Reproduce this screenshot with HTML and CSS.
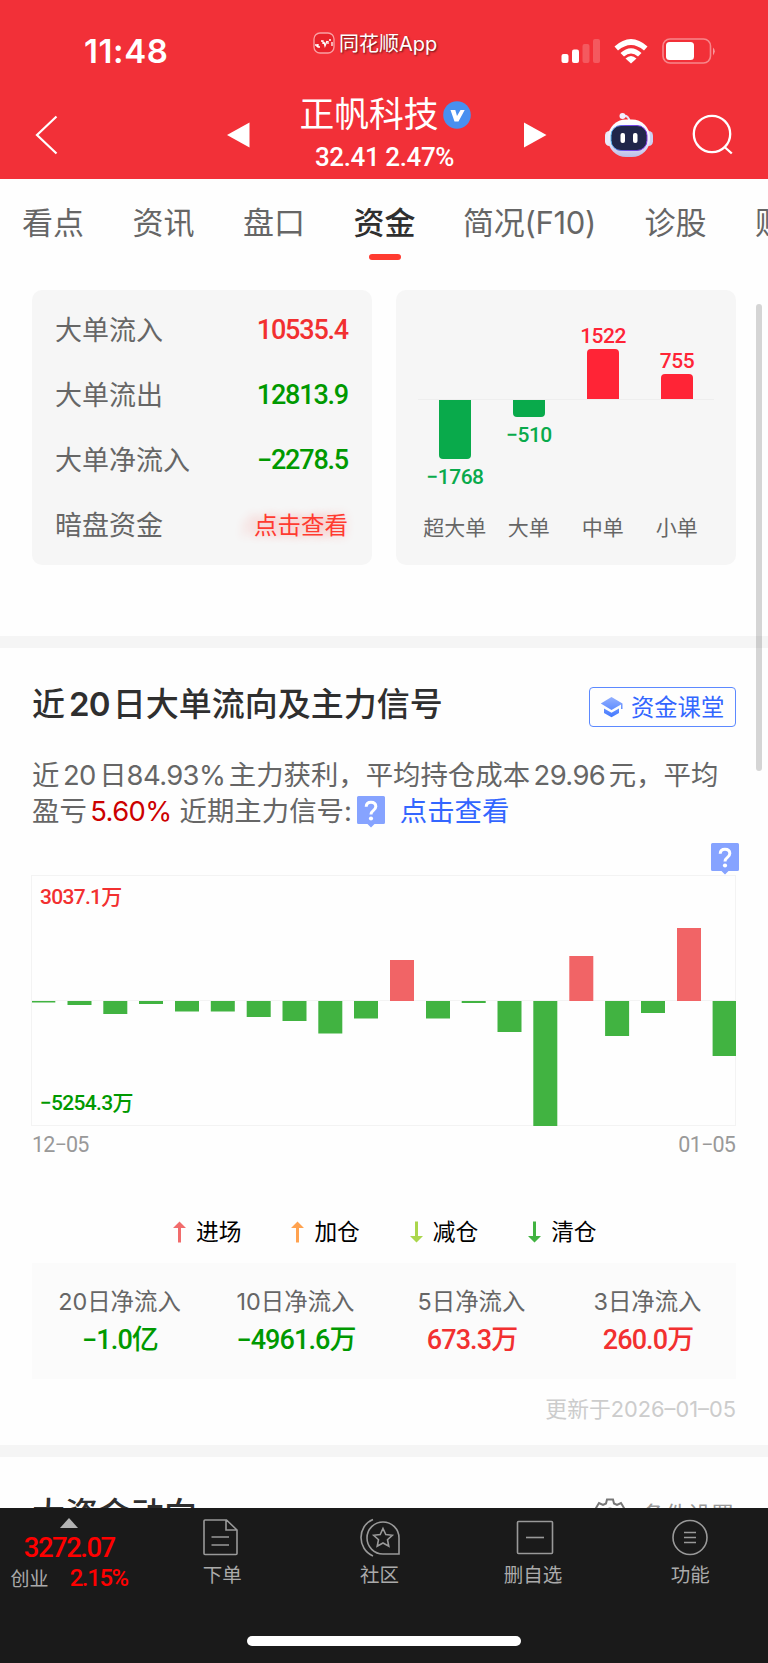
FILE: index.html
```html
<!DOCTYPE html>
<html lang="zh-CN">
  <head>
    <meta charset="utf-8" />
    <title>正帆科技</title>
    <meta name="viewport" content="width=device-width, initial-scale=1" />
    <link rel="stylesheet" href="styles.css">
  </head>

  <body>
    <header class="header">
      <div class="status">
        <span class="time">11:48</span>
        <div class="source">
          <svg width="22" height="22" viewBox="0 0 22 22">
            <rect x="1" y="1" width="20" height="20" rx="6" fill="#e8222b" stroke="#f9a0a3" stroke-width="1.3" />
            <path d="M2 13h2v2M5 12v3h2M8 9h2v3M11 10l1 4 2-5M15 9v3M16 8h2M19 10v4" fill="none" stroke="#fff" stroke-width="1.3" />
          </svg>
          <span>同花顺App</span>
        </div>
        <svg class="signals" width="156" height="28" viewBox="0 0 156 28">
          <g fill="#fff">
            <rect x="1.5" y="17" width="7" height="9" rx="2" />
            <rect x="12" y="12.500" width="7" height="13.500" rx="2" />
            <rect x="22.500" y="7" width="7" height="19" rx="2" opacity=".2" />
            <rect x="33" y="2" width="7" height="24" rx="2" opacity=".2" />
            <path d="M54.500 9.500Q71 -5.500 87.500 9.500L84 13.500Q71 2.500 58 13.500Z" />
            <path d="M60.500 16Q71 6.500 81.500 16L78 19.500Q71 13.500 64 19.500Z" />
            <path d="M65.500 21.500Q71 16.500 76.500 21.500L71 26.500Z" />
            <rect x="106" y="5" width="28" height="18" rx="3.500" />
            <path d="M153 10.500q3.500 3.500 0 8z" opacity=".5" />
          </g>
          <rect x="103" y="2" width="47.500" height="24" rx="7" fill="none" stroke="#fff" stroke-width="1.600" opacity=".42" />
        </svg>
      </div>

      <div class="title-bar">
        <svg class="back" width="26" height="42" viewBox="0 0 26 42"><path d="M22.500 2.500L3 21l19.500 18.500" fill="none" stroke="#fff" stroke-width="2.200" /></svg>
        <svg class="prev" width="23" height="26" viewBox="0 0 23 26"><path d="M0 13L22.500 .5v25z" fill="#fff" /></svg>
        <div class="stock">
          <div class="stock-name">
            <span>正帆科技</span>
            <svg width="28" height="28" viewBox="0 0 28 28">
              <circle cx="14" cy="14" r="13.800" fill="#4890f0" />
              <path d="M7.500 9h4.800l1.700 6 3.500-6h4.200l-6.200 11.500h-4z" fill="#fff" />
            </svg>
          </div>
          <div class="stock-price num">32.41 2.47%</div>
        </div>
        <svg class="next" width="23" height="26" viewBox="0 0 23 26"><path d="M22.500 13L0 .5v25z" fill="#fff" /></svg>
        <svg class="robot" width="50" height="46" viewBox="0 0 50 46">
          <defs>
            <linearGradient id="head" x1="0" y1="0" x2="0" y2="1"><stop offset="0" stop-color="#fff" /><stop offset=".6" stop-color="#ece9fa" /><stop offset="1" stop-color="#b9bde6" /></linearGradient>
            <linearGradient id="face" x1="0" y1="0" x2="1" y2="0"><stop offset="0" stop-color="#55b4ee" /><stop offset=".4" stop-color="#6c4be8" /><stop offset="1" stop-color="#7c35dd" /></linearGradient>
          </defs>
          <path d="M19 4q6-1 6.500 6" fill="none" stroke="#e6e2f6" stroke-width="2" />
          <circle cx="18.500" cy="4" r="3" fill="#f3efff" />
          <rect x="1" y="19" width="9" height="15" rx="4.500" fill="#e9eaf8" />
          <rect x="40" y="19" width="9" height="15" rx="4.500" fill="#cdd0f2" />
          <rect x="4" y="7.500" width="42" height="37.500" rx="18" fill="url(#head)" />
          <rect x="7" y="13.500" width="36" height="25" rx="10" fill="#20264a" stroke="url(#face)" stroke-width="1" />
          <rect x="16.500" y="21" width="4.500" height="10" rx="2" fill="#fff" />
          <rect x="29" y="21" width="4.500" height="10" rx="2" fill="#fff" />
        </svg>
        <svg class="search" width="42" height="42" viewBox="0 0 42 42"><g fill="none" stroke="#fff" stroke-width="2.300"><circle cx="20" cy="20" r="18.200" /><path d="M32 32.500l7.800 7" /></g></svg>
      </div>
    </header>

    <nav class="tabs">
      <a>看点</a>
      <a>资讯</a>
      <a>盘口</a>
      <a class="active">资金</a>
      <a class="f10">简况(F10)</a>
      <a>诊股</a>
      <a>财务</a>
    </nav>

    <main class="content">
      <section class="cards">
        <div class="card flow">
          <div class="flow-row"><span>大单流入</span><b class="num red">10535.4</b></div>
          <div class="flow-row"><span>大单流出</span><b class="num green">12813.9</b></div>
          <div class="flow-row"><span>大单净流入</span><b class="num green">−2278.5</b></div>
          <div class="flow-row"><span>暗盘资金</span><a class="locked">点击查看</a></div>
        </div>
        <div class="card orders">
          <div class="order">
            <div class="up"></div>
            <div class="down"><i style="height: 59px"></i><b class="num">−1768</b></div>
            <span>超大单</span>
          </div>
          <div class="order">
            <div class="up"></div>
            <div class="down"><i style="height: 17px"></i><b class="num">−510</b></div>
            <span>大单</span>
          </div>
          <div class="order">
            <div class="up"><b class="num">1522</b><i style="height: 50px"></i></div>
            <div class="down"></div>
            <span>中单</span>
          </div>
          <div class="order">
            <div class="up"><b class="num">755</b><i style="height: 25px"></i></div>
            <div class="down"></div>
            <span>小单</span>
          </div>
        </div>
      </section>

      <section class="signal">
        <div class="section-head">
          <h2>近<em>20</em>日大单流向及主力信号</h2>
          <a class="lesson">
            <svg width="24" height="22" viewBox="0 0 24 22">
              <defs><linearGradient id="cap" x1="0" y1="0" x2="0" y2="1"><stop offset="0" stop-color="#93b0ff" /><stop offset="1" stop-color="#4379ff" /></linearGradient></defs>
              <path d="M11.500 1L22.500 7.500v5.500h-1.500V8.500L11.500 14 .8 7.500zM4 12.500l7.500 4.300 7.500-4.300V17l-7.500 4.200L4 17z" fill="url(#cap)" />
            </svg>
            <span>资金课堂</span>
          </a>
        </div>

        <p class="summary">
          近<em>20</em>日<em class="tight">84.93%</em>主力获利，平均持仓成本<em>29.96</em>元，平均<br />
          盈亏<em class="profit">5.60%</em>近期主力信号:<svg class="help" width="28" height="32" viewBox="0 0 28 32"><use href="#help" /></svg><a>点击查看</a>
        </p>

        <div class="help-row">
          <svg width="28" height="32" viewBox="0 0 28 32">
            <g id="help">
              <path d="M1.500 0h25q1.500 0 1.500 1.500v25q0 1.500-1.500 1.500H17.500L14 31.500 10.500 28H1.500Q0 28 0 26.500v-25Q0 0 1.500 0z" fill="#86a3ff" />
              <path d="M9.200 10.800q.2-4.500 4.800-4.500t4.800 4.100q0 2.200-2.600 4.200-2.200 1.600-2.200 4" fill="none" stroke="#fff" stroke-width="3" />
              <circle cx="14" cy="22.500" r="2.100" fill="#fff" />
            </g>
          </svg>
        </div>

        <div class="chart">
          <span class="num red">3037.1万</span>
          <svg width="704" height="251" viewBox="0 0 704 251">
            <path d="M0 125.500H704" stroke="#f3f3f3" />
            <g fill="#f16466">
              <rect x="358" y="85" width="24" height="41" />
              <rect x="537.300" y="81" width="24" height="45" />
              <rect x="645" y="53" width="24" height="73" />
            </g>
            <g fill="#41b341">
              <rect x="0" y="126" width="23.300" height="1.500" />
              <rect x="35.500" y="126" width="24" height="4" />
              <rect x="71.300" y="126" width="24" height="13" />
              <rect x="107" y="126" width="24" height="3" />
              <rect x="143" y="126" width="24" height="10.500" />
              <rect x="178.800" y="126" width="24" height="10.500" />
              <rect x="214.700" y="126" width="24" height="16" />
              <rect x="250.500" y="126" width="24" height="20" />
              <rect x="286.300" y="126" width="24" height="32.500" />
              <rect x="322" y="126" width="24" height="17.500" />
              <rect x="394" y="126" width="24" height="17.500" />
              <rect x="429.700" y="126" width="24" height="2" />
              <rect x="465.500" y="126" width="24" height="31" />
              <rect x="501.300" y="126" width="24" height="125" />
              <rect x="573.100" y="126" width="24" height="35" />
              <rect x="609" y="126" width="24" height="12" />
              <rect x="680.600" y="126" width="23.400" height="55" />
            </g>
          </svg>
          <span class="num green low">−5254.3万</span>
        </div>
        <div class="dates num"><span>12−05</span><span>01−05</span></div>

        <div class="legend">
          <span><svg width="13" height="22" viewBox="0 0 13 22"><path d="M6.500 .5L13 7H8v14.500H5V7H0z" fill="#f16c6c" /></svg>进场</span>
          <span><svg width="13" height="22" viewBox="0 0 13 22"><path d="M6.500 .5L13 7H8v14.500H5V7H0z" fill="#ffa24f" /></svg>加仓</span>
          <span><svg width="13" height="22" viewBox="0 0 13 22"><path d="M6.500 21.500L13 15H8V.5H5V15H0z" fill="#aad64b" /></svg>减仓</span>
          <span><svg width="13" height="22" viewBox="0 0 13 22"><path d="M6.500 21.500L13 15H8V.5H5V15H0z" fill="#41b341" /></svg>清仓</span>
        </div>

        <div class="totals">
          <div><span>20日净流入</span><b class="num green">−1.0亿</b></div>
          <div><span>10日净流入</span><b class="num green">−4961.6万</b></div>
          <div><span>5日净流入</span><b class="num red">673.3万</b></div>
          <div><span>3日净流入</span><b class="num red">260.0万</b></div>
        </div>
        <p class="updated">更新于2026–01–05</p>
      </section>

      <section class="trend">
        <h2>大资金动向</h2>
        <span class="settings">
          <svg width="30" height="30" viewBox="0 0 30 30"><g fill="none" stroke="#777" stroke-width="2"><path d="M12 1.500h6l1 4 3 1.500 4-2 3 5-3 3v4l3 3-3 5-4-1-3 2-1 3h-6l-1-3-3-2-4 1-3-5 3-3v-4l-3-3 3-5 4 2 3-1.500z" /><circle cx="15" cy="15" r="4.500" /></g></svg>
          条件设置
        </span>
      </section>
    </main>

    <footer class="footer">
      <div class="toolbar">
        <div class="index">
          <svg width="18" height="10" viewBox="0 0 18 10"><path d="M9 0l9 10H0z" fill="#b3b3b3" /></svg>
          <b class="num">3272.07</b>
          <div><span>创业</span><b class="num">2.15%</b></div>
        </div>
        <div class="tool order-tool">
          <svg width="40" height="40" viewBox="0 0 40 40"><path d="M5 3h21.500L37 13v23.500q0 1-1 1H5q-1 0-1-1V4q0-1 1-1zM26 3v10h10.500M11.500 20H29M11.500 28H29" /></svg>
          <span>下单</span>
        </div>
        <div class="tool">
          <svg width="42" height="40" viewBox="0 0 42 40"><path d="M14 2.500C-2 9-2 32 14 39M40 37H24A16 16 0 1 1 40 21zM24 11.500l2.800 6 6.500.8-4.800 4.400 1.300 6.600L24 26l-5.800 3.300 1.300-6.600-4.800-4.400 6.500-.8z" /></svg>
          <span>社区</span>
        </div>
        <div class="tool remove-tool">
          <svg width="40" height="40" viewBox="0 0 40 40"><rect x="2.500" y="4.500" width="35" height="32" rx="1" /><path d="M11 20.500h18" /></svg>
          <span>删自选</span>
        </div>
        <div class="tool">
          <svg width="40" height="40" viewBox="0 0 40 40"><circle cx="20" cy="20.500" r="17" /><path d="M14 15.500h12M14 20.500h12M14 25.500h12" /></svg>
          <span>功能</span>
        </div>
      </div>
      <div class="home"></div>
    </footer>
    <div class="scrollbar"></div>
  </body>
</html>
```
FILE: styles.css
```css
* {
  box-sizing: border-box;
}

body {
  margin: 0;
  width: 768px;
  height: 1663px;
  overflow: hidden;
  position: relative;
  display: flex;
  flex-direction: column;
  background: #fefefe;
  color: #666;
  font-family: Inter, "Noto Sans CJK SC", sans-serif;
}

svg {
  display: block;
  flex: none;
}

h2,
p {
  margin: 0;
}

em {
  font-style: normal;
}

.num {
  font-family: Roboto, "Noto Sans CJK SC", sans-serif;
  font-weight: 500;
}

.red {
  color: #f23030;
}

.green {
  color: #009900;
}

/* header */
.header {
  flex: none;
  height: 179px;
  background: #f23038;
  color: #fff;
}

.status {
  display: flex;
  align-items: flex-start;
  height: 92px;
  padding-left: 84px;
}

.time {
  width: 229px;
  padding-top: 32px;
  font-size: 33px;
  font-weight: 600;
  line-height: 39px;
  letter-spacing: 0.6px;
}

.source {
  display: flex;
  gap: 4px;
  width: 247px;
  padding-top: 32px;
  font-size: 20px;
  line-height: 24px;
  text-shadow: 1px 1px 2px rgba(0, 0, 0, 0.6);
}

.signals {
  margin-top: 37px;
}

.title-bar {
  display: flex;
  align-items: flex-start;
  padding-left: 34px;
}

.back {
  margin: 22px 167px 0 0;
}

.prev,
.next {
  margin-top: 30px;
}

.stock {
  width: 274px;
  text-align: center;
}

.stock-name {
  display: flex;
  align-items: center;
  justify-content: center;
  gap: 4px;
  padding-right: 4px;
  height: 45px;
  font-size: 34.8px;
}

.stock-name span {
  margin-top: -5px;
}

.stock-price {
  height: 40px;
  padding-right: 5px;
  line-height: 40px;
  font-size: 26px;
  letter-spacing: -0.4px;
}

.robot {
  margin: 20px 38px 0 57px;
}

.search {
  margin-top: 22px;
}

/* tabs */
.tabs {
  flex: none;
  display: flex;
  gap: 48.5px;
  height: 111px;
  padding: 21px 0 0 22px;
  overflow: hidden;
  white-space: nowrap;
  font-size: 31px;
  line-height: 46px;
}

.tabs a {
  flex: none;
}

.tabs .active {
  color: #2f2f2f;
  font-weight: 500;
}

.tabs .active::after {
  content: "";
  display: block;
  width: 32px;
  height: 6px;
  margin: 8px auto 0;
  border-radius: 3px;
  background: #ff3b30;
}

.tabs .f10 {
  margin-left: -1px;
  letter-spacing: -0.3px;
}

/* money flow cards */
.content {
  flex: none;
  height: 1218px;
  overflow: hidden;
}

.cards {
  display: flex;
  gap: 24px;
  height: 358px;
  padding: 0 32px;
  border-bottom: 12px solid #f5f5f5;
}

.card {
  width: 340px;
  height: 275px;
  border-radius: 10px;
  background: #f6f6f6;
}

.flow {
  padding: 8px 24px 8px 23px;
}

.flow-row {
  display: flex;
  justify-content: space-between;
  height: 65px;
  line-height: 65px;
  font-size: 27px;
}

.flow-row b {
  letter-spacing: -1.2px;
}

.locked {
  padding-left: 18px;
  color: #ff3b30;
  font-size: 23.5px;
  text-shadow: -14px 0 8px rgba(255, 59, 48, 0.2), 0 0 10px rgba(255, 59, 48, 0.25);
}

.orders {
  display: flex;
  padding-left: 22px;
}

.order {
  width: 74px;
  text-align: center;
  font-size: 21px;
}

.order span {
  display: block;
  margin: 0 -5px 0 -5.5px;
  line-height: 40px;
}

.up,
.down {
  display: flex;
  flex-direction: column;
  align-items: center;
}

.up {
  height: 110px;
  justify-content: flex-end;
  border-bottom: 1px solid #eee;
  color: #ff2436;
}

.down {
  height: 108px;
  color: #09aa4b;
}

.up i,
.down i {
  width: 32px;
  background: currentColor;
}

.up i {
  border-radius: 4px 4px 0 0;
}

.down i {
  border-radius: 0 0 4px 4px;
}

.order b {
  letter-spacing: -0.5px;
}

.up b {
  line-height: 25px;
}

.down b {
  line-height: 37px;
}

/* 20 day signal */
.signal {
  height: 809px;
  padding: 0 32px;
  border-bottom: 12px solid #f5f5f5;
}

.section-head {
  display: flex;
  justify-content: space-between;
  align-items: flex-start;
  height: 109px;
  padding-top: 39px;
}

h2 {
  color: #2f2f2f;
  font-size: 33px;
  font-weight: 500;
  line-height: 38px;
}

.section-head h2 {
  margin-top: -2px;
}

h2 em {
  margin: 0 3px 0 4px;
  font-weight: 600;
  letter-spacing: -0.8px;
}

.lesson {
  display: flex;
  align-items: center;
  gap: 7px;
  width: 147px;
  height: 40px;
  padding-left: 10px;
  border: 1.5px solid #5c89ff;
  border-radius: 4px;
  color: #3366ff;
  font-size: 23.3px;
  white-space: nowrap;
}

.lesson span {
  margin-top: -3px;
}

.summary {
  height: 86px;
  font-size: 27.4px;
  line-height: 36px;
  white-space: nowrap;
}

.summary em {
  margin: 0 3.5px;
  letter-spacing: -0.6px;
}

.summary .tight {
  margin-left: 0;
}

.summary .profit {
  margin-right: 8px;
  color: #cc0000;
}

.summary a {
  color: #3366ff;
}

.help {
  display: inline-block;
  margin: 0 15px 0 5px;
  vertical-align: -7px;
}

.help-row {
  display: flex;
  justify-content: flex-end;
  height: 32px;
  margin-right: -2.5px;
}

.chart {
  display: grid;
  height: 251px;
  margin-left: -1px;
  border: 1px solid #f3f3f3;
  font-size: 21px;
}

.chart svg,
.chart span {
  grid-area: 1 / 1;
}

.chart svg {
  margin-top: -1px;
}

.chart span {
  padding: 0 8px;
  line-height: 42px;
  letter-spacing: -0.7px;
}

.chart .low {
  align-self: end;
  line-height: 45px;
}

.dates {
  display: flex;
  justify-content: space-between;
  height: 36px;
  padding-right: 1px;
  line-height: 38px;
  font-size: 21.5px;
  font-weight: 400;
  letter-spacing: -0.8px;
  color: #999;
}

.legend {
  display: flex;
  align-items: flex-start;
  gap: 50px;
  height: 101px;
  padding: 50px 0 0 141px;
  color: #000;
  font-size: 22.7px;
  line-height: 40px;
}

.legend span {
  display: flex;
  align-items: center;
  gap: 10px;
}

.totals {
  display: flex;
  height: 116px;
  padding-top: 19px;
  background: #fbfbfb;
  text-align: center;
}

.totals div {
  width: 176px;
}

.totals span,
.totals b {
  display: block;
  height: 39px;
  line-height: 39px;
}

.totals span {
  margin-left: -1px;
  font-size: 23.4px;
}

.totals b {
  font-size: 27px;
  letter-spacing: -0.9px;
}

.updated {
  color: #ccc;
  font-size: 21.8px;
  line-height: 61px;
  text-align: right;
}

.trend {
  display: flex;
  justify-content: space-between;
  padding: 38px 34px 0 32px;
}

.settings {
  display: flex;
  align-items: center;
  gap: 17px;
  height: 36px;
  color: #999;
  font-size: 23px;
}

/* bottom bar */
.footer {
  flex: none;
  height: 155px;
  background: #1a1a1a;
  color: #aaa;
}

.toolbar {
  display: flex;
  height: 128px;
  padding-top: 9px;
}

.index {
  display: flex;
  flex-direction: column;
  align-items: center;
  width: 139px;
  padding-top: 1px;
}

.index .num {
  color: #ff0000;
  font-size: 27.5px;
  line-height: 40px;
  letter-spacing: -1.5px;
}

.index div {
  display: flex;
  gap: 21px;
  font-size: 19px;
  line-height: 23px;
}

.index div .num {
  font-size: 23.8px;
  line-height: 20px;
  letter-spacing: -1.3px;
}

.tool {
  width: 156px;
  display: flex;
  flex-direction: column;
  align-items: center;
  font-size: 19.5px;
  line-height: 36px;
}

.order-tool {
  width: 164px;
}

.order-tool span {
  padding-left: 4px;
}

.remove-tool span {
  padding-right: 4px;
}

.tool svg {
  fill: none;
  stroke: #999;
  stroke-width: 1.6;
}

.home {
  width: 274px;
  height: 10px;
  margin: 0 auto;
  border-radius: 5px;
  background: #fff;
}

.scrollbar {
  position: absolute;
  top: 304px;
  right: 6px;
  width: 6px;
  height: 467px;
  border-radius: 3px;
  background: rgba(0, 0, 0, 0.16);
}
```
